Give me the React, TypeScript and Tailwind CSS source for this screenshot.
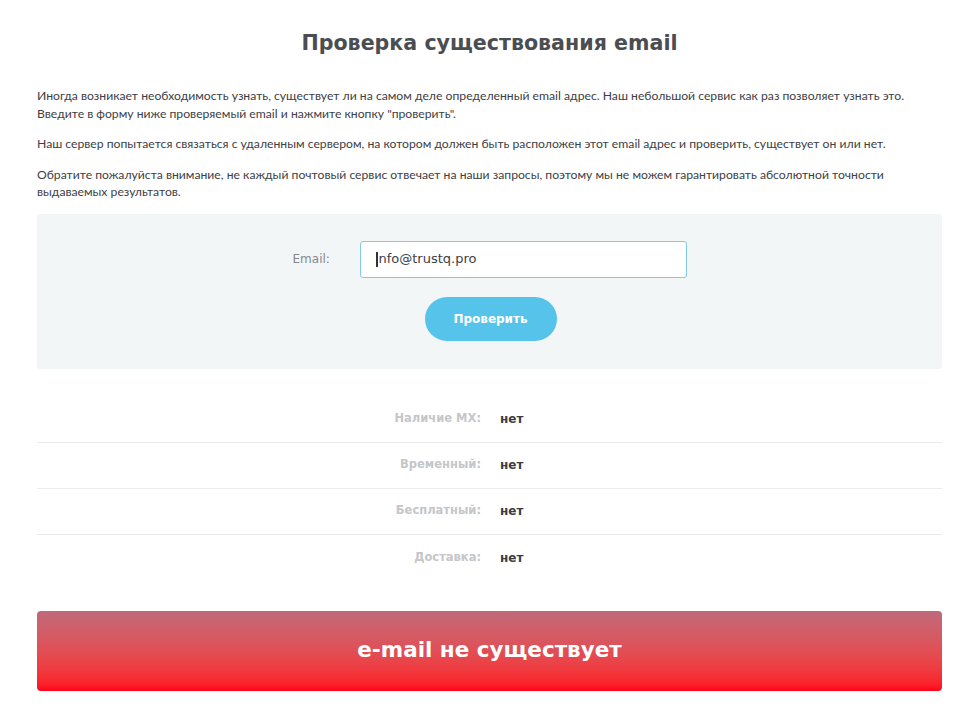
import React from "react";

const rows = [
  { label: "Наличие MX:", value: "нет" },
  { label: "Временный:", value: "нет" },
  { label: "Бесплатный:", value: "нет" },
  { label: "Доставка:", value: "нет" },
];

export default function App() {
  const head = { fontFamily: '"DejaVu Sans", "Open Sans", sans-serif' };
  const body = { fontFamily: 'Lato, "Open Sans", sans-serif' };
  return (
    <div className="min-h-[720px] bg-white px-[37px] pt-[30px]">
      <h1
        className="text-center text-[20.6px] font-bold leading-[26px] text-[#4a4d52]"
        style={head}
      >
        Проверка существования email
      </h1>
      <div className="mt-[31px] text-[12.2px] leading-[17.5px] text-[#3d4045]" style={body}>
        <p>
          Иногда возникает необходимость узнать, существует ли на самом деле определенный email адрес. Наш небольшой сервис как раз позволяет узнать это.
          <br />
          Введите в форму ниже проверяемый email и нажмите кнопку "проверить".
        </p>
        <p className="mt-[13px]">
          Наш сервер попытается связаться с удаленным сервером, на котором должен быть расположен этот email адрес и проверить, существует он или нет.
        </p>
        <p className="mt-[13px]">
          Обратите пожалуйста внимание, не каждый почтовый сервис отвечает на наши запросы, поэтому мы не можем гарантировать абсолютной точности
          <br />
          выдаваемых результатов.
        </p>
      </div>
      <div className="mt-[13px] flex h-[155px] flex-col items-center rounded-[3px] bg-[#f3f6f7] pt-[27px]">
        <div className="flex items-center">
          <label className="w-[64px] text-[12px] text-[#85888c]" style={head}>
            Email:
          </label>
          <div className="ml-[3px] flex h-[37px] w-[327px] items-center rounded-[3px] border border-[#7fcbe6] bg-white pl-[15px] text-[13px] text-[#3d4045]" style={head}>
            <span className="mr-[1px] inline-block h-[15px] w-[2px] bg-[#333]" />
            nfo@trustq.pro
          </div>
        </div>
        <button
          className="mt-[19px] ml-[2px] h-[44px] w-[132px] rounded-full bg-[#55c3ea] text-[12px] font-bold text-white"
          style={head}
        >
          Проверить
        </button>
      </div>
      <div className="mt-[28px]">
        {rows.map((r, i) => (
          <div
            key={r.label}
            className={`flex h-[46px] items-center ${i < rows.length - 1 ? "border-b border-[#ebebeb]" : ""}`}
          >
            <div className="w-[444px] text-right text-[11.5px] font-bold text-[#c4c6c9]" style={head}>
              {r.label}
            </div>
            <div className="ml-[19px] text-[12px] font-bold text-[#3a3c40]" style={head}>
              {r.value}
            </div>
          </div>
        ))}
      </div>
      <div
        className="mt-[30px] flex h-[80px] items-center justify-center rounded-[4px] bg-gradient-to-b from-[#c0697a] to-[#ff0019] text-[21.5px] font-bold text-white"
        style={head}
      >
        e-mail не существует
      </div>
    </div>
  );
}
